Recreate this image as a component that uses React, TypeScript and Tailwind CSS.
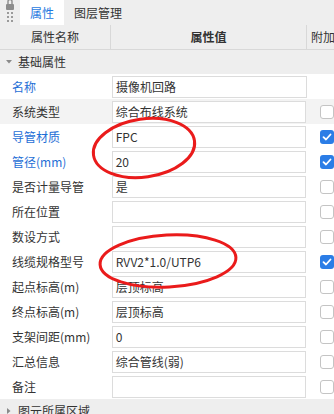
import React from 'react';

type Row = { label: string; value: string; blue?: boolean; cb: boolean | null; hl?: boolean };

const rows: Row[] = [
  { label: '名称', value: '摄像机回路', blue: true, cb: null },
  { label: '系统类型', value: '综合布线系统', cb: false, hl: true },
  { label: '导管材质', value: 'FPC', blue: true, cb: true },
  { label: '管径(mm)', value: '20', blue: true, cb: true },
  { label: '是否计量导管', value: '是', cb: false },
  { label: '所在位置', value: '', cb: false },
  { label: '数设方式', value: '', cb: false },
  { label: '线缆规格型号', value: 'RVV2*1.0/UTP6', cb: true },
  { label: '起点标高(m)', value: '层顶标高', cb: false },
  { label: '终点标高(m)', value: '层顶标高', cb: false },
  { label: '支架间距(mm)', value: '0', cb: false },
  { label: '汇总信息', value: '综合管线(弱)', cb: false },
  { label: '备注', value: '', cb: false },
];

function Checkbox({ checked }: { checked: boolean }) {
  if (checked) {
    return (
      <div className="w-[14px] h-[14px] rounded-[3px] bg-[#2b7de6] flex items-center justify-center">
        <svg width="10" height="10" viewBox="0 0 10 10">
          <path d="M1.5 5.2 L4 7.5 L8.5 2.5" fill="none" stroke="#ffffff" strokeWidth="1.8" strokeLinecap="round" strokeLinejoin="round" />
        </svg>
      </div>
    );
  }
  return <div className="w-[14px] h-[14px] rounded-[3px] bg-white border border-[#c4c4c4]" />;
}

export default function App() {
  return (
    <div
      className="relative w-[334px] h-[414px] overflow-hidden bg-white text-[12px] text-[#333333]"
      style={{ fontFamily: '"Noto Sans CJK SC", "Noto Sans", sans-serif' }}
    >
      {/* Top tab bar */}
      <div className="flex h-[25px] bg-[#eeeeee]">
        <div className="w-[20px] flex flex-col items-center">
          <svg width="14" height="24" viewBox="0 0 14 24">
            <path d="M5 4 V1.5 A2 2 0 0 1 9 1.5 V4" fill="none" stroke="#8c8c8c" strokeWidth="1.4" />
            <rect x="3" y="4" width="8" height="6" rx="1" fill="#8c8c8c" />
            <rect x="4" y="12" width="2" height="2" fill="#9a9a9a" />
            <rect x="8" y="12" width="2" height="2" fill="#9a9a9a" />
            <rect x="4" y="16" width="2" height="2" fill="#9a9a9a" />
            <rect x="8" y="16" width="2" height="2" fill="#9a9a9a" />
            <rect x="4" y="20" width="2" height="2" fill="#9a9a9a" />
            <rect x="8" y="20" width="2" height="2" fill="#9a9a9a" />
          </svg>
        </div>
        <div className="w-[44px] bg-white flex items-center justify-center text-[#1f7ae0]">属性</div>
        <div className="flex items-center pl-[10px] text-[#333333]">图层管理</div>
      </div>

      {/* Header */}
      <div className="flex h-[25px] bg-[#eeeeee] border-b border-[#d8d8d8]">
        <div className="w-[111px] flex items-center justify-center border-r border-[#d8d8d8]">属性名称</div>
        <div className="w-[196px] flex items-center justify-center border-r border-[#d8d8d8] font-bold">属性值</div>
        <div className="flex-1 flex items-center pl-[4px] whitespace-nowrap overflow-hidden">附加</div>
      </div>

      {/* Group */}
      <div className="flex h-[24px] items-center bg-[#eeeeee]">
        <div className="w-[18px] flex justify-center">
          <svg width="6" height="4" viewBox="0 0 6 4">
            <path d="M0 0 H6 L3 3.5 Z" fill="#8a8a8a" />
          </svg>
        </div>
        <span>基础属性</span>
      </div>

      {/* Rows */}
      {rows.map((r, i) => (
        <div key={i} className={`flex h-[25px] items-center ${r.hl ? 'bg-[#f3f3f3]' : 'bg-white'}`}>
          <div className={`w-[112px] pl-[12px] whitespace-nowrap ${r.blue ? 'text-[#1f6fd6]' : 'text-[#333333]'}`}>{r.label}</div>
          <div className="w-[195px] h-[22px] border border-[#dcdcdc] bg-white flex items-center pl-[3px] whitespace-nowrap">
            {r.value}
          </div>
          <div className="pl-[14px] flex items-center">
            {r.cb !== null && <Checkbox checked={r.cb} />}
          </div>
        </div>
      ))}

      {/* Group 2 */}
      <div className="flex h-[24px] items-center bg-[#eeeeee]">
        <div className="w-[18px] flex justify-center">
          <svg width="4" height="6" viewBox="0 0 4 6">
            <path d="M0 0 V6 L3.5 3 Z" fill="#8a8a8a" />
          </svg>
        </div>
        <span>图元所属区域</span>
      </div>

      {/* Red annotation ellipses */}
      <svg className="absolute left-0 top-0 pointer-events-none" width="334" height="414" viewBox="0 0 334 414">
        <ellipse cx="144" cy="148" rx="51" ry="29" transform="rotate(-8 144 148)" fill="none" stroke="#ea1b1b" strokeWidth="3" />
        <ellipse cx="168" cy="261" rx="68" ry="26" transform="rotate(-3 168 261)" fill="none" stroke="#ea1b1b" strokeWidth="3" />
      </svg>
    </div>
  );
}
